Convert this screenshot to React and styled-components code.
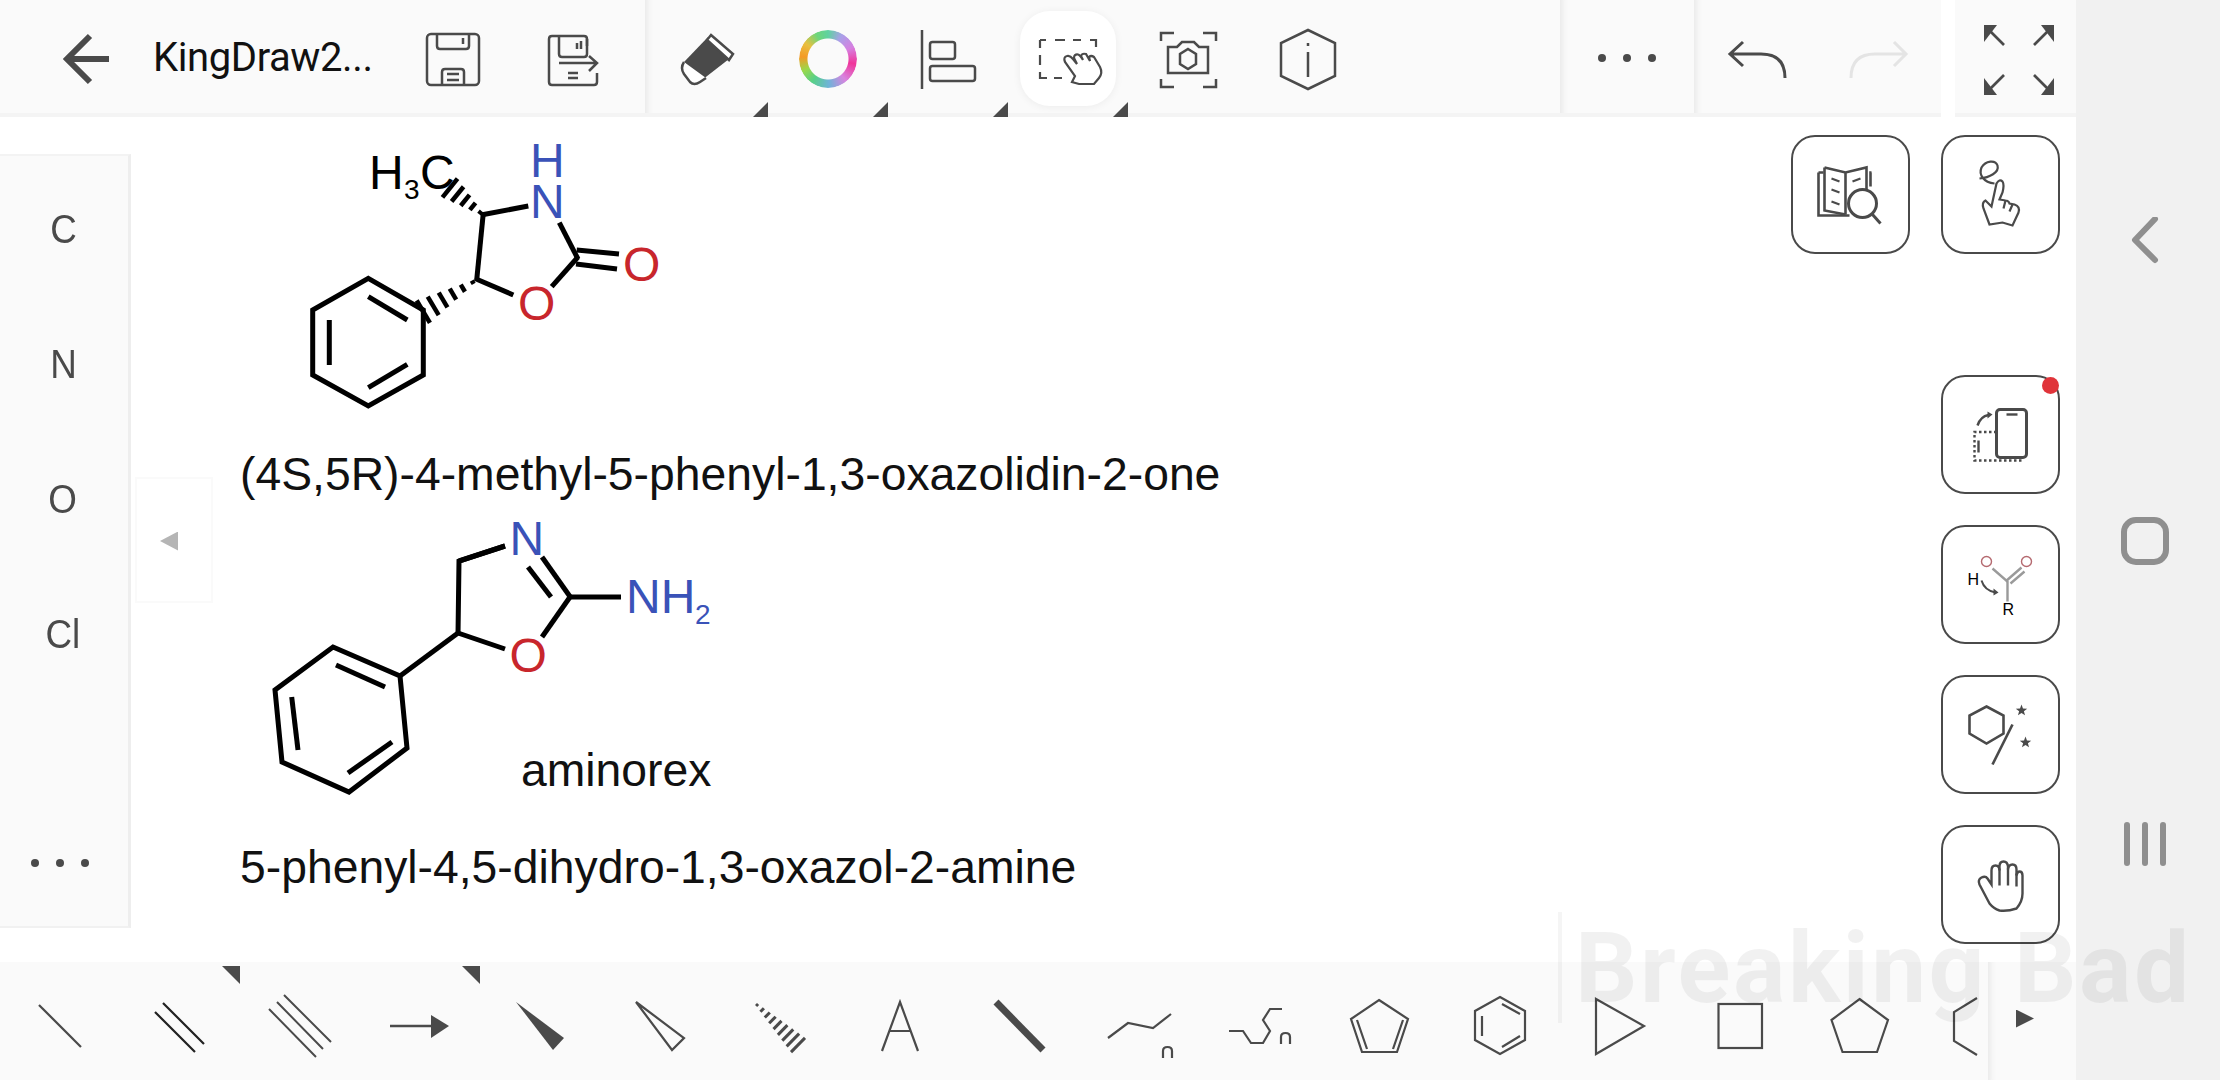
import React from 'react';
import styled, { createGlobalStyle } from 'styled-components';

const Global = createGlobalStyle`
  html, body { margin: 0; padding: 0; background: #fff; }
  #root { width: 2220px; height: 1080px; overflow: hidden; }
`;

const INK = '#4a4a4a';
const BLUE = '#3a52b8';
const RED = '#c8262c';

const Page = styled.div`
  position: relative; display: flex; width: 2220px; height: 1080px; overflow: hidden;
  background: #fff; font-family: "Liberation Sans", Arial, sans-serif;
`;
const Screen = styled.div`display: flex; flex-direction: column; width: 2076px; height: 1080px;`;
const TopBar = styled.header`display: flex; height: 117px; flex: none;`;
const TopGroup = styled.div`
  display: flex; flex: none; width: ${p => p.$w}px; margin-left: ${p => p.$gap || 0}px;
  background: #fafafa;
  box-shadow: inset 0 -4px 0 #f4f4f4 ${p => p.$edge ? ', inset 8px 0 6px -6px #e6e6e6' : ''};
`;
const CenterGroup = styled(TopGroup)`align-items: center; justify-content: center;`;
const Cell = styled.div`
  position: relative; flex: none; display: flex; align-items: center; justify-content: center;
  width: ${p => p.$w || 120}px; height: 100%; margin-left: ${p => p.$shift || 0}px;
`;
const Corner = styled.span`
  position: absolute; right: 0; bottom: 0; width: 15px; height: 15px; background: ${INK};
  clip-path: polygon(100% 0, 100% 100%, 0 100%);
`;
const FlagCorner = styled.span`
  position: absolute; right: 0; top: 4px; width: 18px; height: 18px; background: ${INK};
  clip-path: polygon(0 0, 100% 0, 100% 100%);
`;
const Title = styled.div`
  flex: none; width: 248px; padding-left: 8px; box-sizing: border-box; align-self: center;
  font-family: Roboto, sans-serif; font-size: 40px; color: #111; white-space: nowrap;
  letter-spacing: -0.4px; margin-top: -3px;
`;
const Tile = styled.div`
  width: 96px; height: 95px; border-radius: 30px; background: #fff;
  box-shadow: 0 1px 8px rgba(0,0,0,.06);
`;
const Pic = styled.svg`display: block; flex: none; fill: none; stroke: ${p => p.$stroke || INK}; stroke-width: ${p => p.$sw || 2.5};`;
const Ring = styled.div`
  width: 58px; height: 58px; border-radius: 50%;
  background: conic-gradient(#5fd2a0 0deg, #a9a0e8 30deg, #d77fe0 65deg, #f0349a 100deg, #d884df 140deg, #6fb3d8 178deg, #58d088 215deg, #9ad84a 245deg, #f59a25 275deg, #e8c040 305deg, #6ed67a 335deg, #5fd2a0 360deg);
  -webkit-mask: radial-gradient(circle, transparent 20px, #000 21px);
  mask: radial-gradient(circle, transparent 20px, #000 21px);
`;
const DotRow = styled.div`display: flex; gap: ${p => p.$gap}px; margin-top: ${p => p.$top || 0}px; margin-right: ${p => p.$right || 0}px;`;
const Dot = styled.i`display: block; width: 8px; height: 8px; border-radius: 50%; background: ${INK};`;
const NavBar = styled.i`display: block; width: 6px; height: 44px; border-radius: 3px; background: #8f8f8f;`;

const Canvas = styled.main`
  position: relative; flex: 1; display: flex; justify-content: space-between; align-items: flex-start; min-height: 0;
`;
const Rail = styled.aside`
  display: flex; flex-direction: column; align-items: center; box-sizing: border-box;
  width: 131px; height: 774px; margin-top: 37px; padding-top: 6px; padding-right: 2px;
  background: #fafafa; border-right: 3px solid #eeeeee; border-top: 2px solid #f3f3f3; border-bottom: 2px solid #f1f1f1;
`;
const Element = styled.div`
  height: 135px; flex: none; display: flex; align-items: center; justify-content: center;
  font-size: 40px; color: ${INK}; transform: scaleX(.92);
`;
const RailMore = styled.div`margin-top: auto; margin-bottom: 59px; margin-right: 6px;`;
const Collapse = styled.div`
  position: absolute; left: 135px; top: 360px; width: 78px; height: 126px; box-sizing: border-box;
  display: flex; align-items: center; justify-content: flex-start; padding-left: 23px;
  border: 2px solid #fafafa; background: #fff;
`;
const CollapseArrow = styled.span`
  width: 18px; height: 19px; background: #b5b5b5; margin-top: 2px;
  clip-path: polygon(0 50%, 100% 0, 100% 100%);
`;
const Sidebar = styled.aside`
  display: flex; flex-direction: column; align-items: flex-end; padding: 18px 16px 0 0; gap: 31px;
`;
const Row = styled.div`display: flex; gap: 31px; margin-bottom: 90px;`;
const SideButton = styled.button`
  position: relative; width: 119px; height: 119px; padding: 0; box-sizing: border-box;
  display: flex; align-items: center; justify-content: center;
  background: #fff; border: 2.5px solid ${INK}; border-radius: 24px;
`;
const Badge = styled.span`
  position: absolute; right: -1px; top: 0; width: 17px; height: 17px; border-radius: 50%; background: #e0343a;
`;
const Molecule = styled.svg`
  position: absolute; left: ${p => p.$x}px; top: ${p => p.$y}px; display: block; fill: none;
  stroke: #000; stroke-width: 5; stroke-linecap: butt; stroke-linejoin: miter;
`;
const Atom = styled.text`
  fill: ${p => p.$c || '#000'}; stroke: none; font-family: "Liberation Sans", Arial, sans-serif; font-size: ${p => p.$s || 48}px;
`;
const Label = styled.div`
  position: absolute; left: ${p => p.$x}px; top: ${p => p.$y}px; white-space: nowrap;
  font-size: 46.3px; line-height: 50px; color: #111;
`;
const BottomBar = styled.footer`display: flex; height: 118px; flex: none; background: #fafafa;`;
const Strip = styled.div`display: flex; width: 1988px; flex: none; overflow: hidden;`;
const Tail = styled.div`
  flex: 1; display: flex; align-items: center; padding-left: 28px; padding-bottom: 5px;
  box-shadow: inset 8px 0 6px -6px #e6e6e6;
`;
const Play = styled.span`width: 18px; height: 18px; background: ${INK}; clip-path: polygon(0 0, 100% 50%, 0 100%);`;
const Nav = styled.nav`
  position: relative; width: 144px; height: 1080px; flex: none; background: #f1f1f1;
  display: flex; flex-direction: column; align-items: center; padding-top: 217px; box-sizing: border-box;
`;
const Watermark = styled.div`
  position: absolute; left: 1575px; top: 914px; white-space: nowrap; pointer-events: none;
  font-family: Roboto, sans-serif; font-size: 98px; line-height: 110px; font-weight: 700;
  color: rgba(0,0,0,.055); letter-spacing: 2.5px;
`;
const WatermarkBar = styled.div`
  position: absolute; left: 1558px; top: 912px; width: 4px; height: 111px; background: rgba(0,0,0,.04); pointer-events: none;
`;

const Top = ({ x, children, sw, stroke }) => (
  <Pic width="120" height="117" viewBox={`${x} 0 120 117`} $sw={sw} $stroke={stroke}>{children}</Pic>
);
const Low = ({ x, children, sw, stroke }) => (
  <Pic width="120" height="118" viewBox={`${x} 962 120 118`} $sw={sw} $stroke={stroke}>{children}</Pic>
);
const Side = ({ x, y, children, sw }) => (
  <Pic width="114" height="114" viewBox={`${x + 2.5} ${y + 2.5} 114 114`} $sw={sw}>{children}</Pic>
);

const Ln = ({ d, w, c, ...r }) => (
  <line x1={d[0]} y1={d[1]} x2={d[2]} y2={d[3]} strokeWidth={w} stroke={c} {...r} />
);

const stripes = (ax, ay, bx, by, n, maxHalf) => {
  const dx = bx - ax, dy = by - ay, L = Math.hypot(dx, dy), nx = -dy / L, ny = dx / L;
  return Array.from({ length: n }, (_, i) => {
    const t = (i + 0.4) / (n - 0.6), h = maxHalf * t + 1;
    const cx = ax + dx * t, cy = ay + dy * t;
    return [cx - nx * h, cy - ny * h, cx + nx * h, cy + ny * h];
  });
};

const Bonds = ({ list }) => list.map((d, i) => <Ln key={i} d={d} />);

const mol1 = [
  [476.7, 280, 483.3, 213], [481, 215, 528.3, 206], [559.3, 222.7, 578, 259],
  [576.7, 250, 619, 254], [576, 264, 617, 269], [578, 257, 551.7, 286.7], [513.3, 295, 475, 278.5],
  [368.3, 296.7, 407.3, 320], [329.3, 320, 329.3, 365], [368.3, 387.7, 407.3, 364.3],
];
const mol2 = [
  [336, 665, 385, 687], [291.7, 697, 298, 750], [348, 773, 392, 742],
  [400, 676, 458, 633], [505, 546, 459, 561], [542, 557, 571, 598], [528, 567, 551, 597],
  [569, 597, 621, 597], [570, 597, 542, 637], [505, 649, 458, 633],
];

const Star = ({ cx, cy, r }) => {
  const pts = Array.from({ length: 10 }, (_, i) => {
    const a = -Math.PI / 2 + i * Math.PI / 5, q = i % 2 ? r * 0.42 : r;
    return `${cx + q * Math.cos(a)},${cy + q * Math.sin(a)}`;
  }).join(' ');
  return <polygon points={pts} fill={INK} stroke="none" />;
};

const Arrowhead = ({ pts }) => <polygon points={pts} fill={INK} stroke="none" />;

export default function App() {
  return (
    <Page>
      <Global />
      <Screen>
        <TopBar>
          <TopGroup $w={645}>
            <Cell $w={145}>
              <Pic width="145" height="117" viewBox="0 0 145 117" $sw={6}>
                <path d="M109 59 H68 M90 36 L67 59 L90 82" />
              </Pic>
            </Cell>
            <Title>KingDraw2...</Title>
            <Cell>
              <Top x={393} sw={2.5}>
                <rect x="427" y="34" width="52" height="51" rx="4" />
                <path d="M437 34 V46 q0 3 3 3 H466 q3 0 3 -3 V34 M463 38 V44 M442 85 V72 q0 -3 3 -3 H461 q3 0 3 3 V85 M447 74 H459 M447 80 H459" />
              </Top>
            </Cell>
            <Cell>
              <Top x={513} sw={2.5}>
                <path d="M587 46 V39 q0 -3 -3 -3 H552 q-3 0 -3 3 V82 q0 3 3 3 H594 q3 0 3 -3 V73" />
                <path d="M559 36 V54 q0 3 3 3 H584 q3 0 3 -3 V39 M559 63 H596 M589 56 L597 63 L589 71 M568 73 H578 M568 78 H578 M581 41 V49 M577 43 V49" />
              </Top>
            </Cell>
          </TopGroup>
          <TopGroup $w={915} $edge>
            <Cell $shift={3}>
              <Top x={648} sw={2.5}>
                <polygon points="684,62 708,37 729,59 702,80" fill={INK} stroke="none" />
                <path d="M711 35 L733 54 L729 60 L707 40 Z" fill="#fff" />
                <path d="M684 62 Q680 68 684 74 L690 82 Q694 86 700 82 L706 78" fill="#fff" />
              </Top>
              <Corner />
            </Cell>
            <Cell><Ring /><Corner /></Cell>
            <Cell>
              <Top x={888} sw={2.5}>
                <path d="M922 30 V89" />
                <rect x="930" y="42" width="25" height="17" rx="2.5" />
                <rect x="930" y="66" width="45" height="15" rx="2.5" />
              </Top>
              <Corner />
            </Cell>
            <Cell>
              <Tile>
                <Pic width="96" height="95" viewBox="1020 12 96 95" $sw={2.2}>
                  <path d="M1040 41 h6 M1055 41 h10 M1073 41 h8 M1090 41 h6 v7 M1040 41 v8 M1040 56 v10 M1040 73 v6 h7 M1054 79 h8" />
                  <path d="M1072 83 L1075 77 L1065 63 Q1063 58 1067 57 Q1070 56 1073 60 L1077 65 L1074 59 Q1074 55 1078 55.5 Q1080 56 1083 61 L1081 57 Q1082 54 1086 55 L1090 62 L1089 58 Q1091 56 1094 58 L1100 68 Q1103 74 1099 79 L1094 85 L1079 85 Z" fill="#fff" />
                </Pic>
              </Tile>
              <Corner />
            </Cell>
            <Cell>
              <Top x={1128} sw={2.5}>
                <path d="M1174 33 H1161 V41 M1203 33 H1216 V41 M1161 79 V87 H1174 M1216 79 V87 H1203" />
                <path d="M1168 73 V47 H1177 L1182 42 H1194 L1199 47 H1208 V73 Z" />
                <polygon points="1188,49 1196,54 1196,64 1188,69 1180,64 1180,54" />
              </Top>
            </Cell>
            <Cell>
              <Top x={1248} sw={2.5}>
                <polygon points="1308,30 1335,43 1335,76 1308,89 1281,76 1281,43" />
                <path d="M1308 52 V77 M1308 43 V46" />
              </Top>
            </Cell>
          </TopGroup>
          <CenterGroup $w={134} $edge>
            <DotRow $gap={17} $top={-1}><Dot /><Dot /><Dot /></DotRow>
          </CenterGroup>
          <TopGroup $w={247} $edge>
            <Pic width="247" height="117" viewBox="1694 0 247 117" $sw={3}>
              <path d="M1743 42 L1730 54 L1743 66 M1730 54 H1761 Q1785 54 1785 78" />
              <path d="M1894 42 L1906 54 L1894 66 M1906 54 H1875 Q1851 54 1851 78" stroke="#e4e4e4" />
            </Pic>
          </TopGroup>
          <TopGroup $w={121} $gap={14}>
            <Pic width="121" height="117" viewBox="1955 0 121 117" $sw={2.6}>
              <Arrowhead pts="1984,25 1997,25 1984,42" /><path d="M1987 28 L2004 45" />
              <Arrowhead pts="2054,25 2041,25 2054,42" /><path d="M2051 28 L2034 45" />
              <Arrowhead pts="1984,95 1997,95 1984,78" /><path d="M1987 92 L2004 75" />
              <Arrowhead pts="2054,95 2041,95 2054,78" /><path d="M2051 92 L2034 75" />
            </Pic>
          </TopGroup>
        </TopBar>

        <Canvas>
          <Rail>
            <Element>C</Element>
            <Element>N</Element>
            <Element>O</Element>
            <Element>Cl</Element>
            <RailMore><DotRow $gap={17}><Dot /><Dot /><Dot /></DotRow></RailMore>
          </Rail>
          <Collapse><CollapseArrow /></Collapse>

          <Molecule $x={300} $y={3} width="380" height="300" viewBox="300 120 380 300">
            <polygon points="368.3,278.3 423.3,310 423.3,375 368.3,406 312.7,375 312.7,310" />
            <Bonds list={mol1} />
            {stripes(476.7, 280, 423.3, 311.7, 6, 12).map((d, i) => <Ln key={i} d={d} w={4.5} />)}
            {stripes(483.3, 215, 450, 188, 5, 11).map((d, i) => <Ln key={i} d={d} w={4.5} />)}
            <Atom x="369" y="189">H</Atom>
            <Atom x="404" y="199" $s={28}>3</Atom>
            <Atom x="420" y="189">C</Atom>
            <Atom x="530" y="177" $c={BLUE}>H</Atom>
            <Atom x="530" y="218" $c={BLUE}>N</Atom>
            <Atom x="518" y="320" $c={RED}>O</Atom>
            <Atom x="623" y="281" $c={RED}>O</Atom>
          </Molecule>

          <Molecule $x={260} $y={393} width="480" height="290" viewBox="260 510 480 290">
            <polygon points="333,647 400,676 407,748 349,792 282,762 275,690" />
            <polyline points="458,635 459,561 505,546" />
            <Bonds list={mol2} />
            <Atom x="509.5" y="555" $c={BLUE}>N</Atom>
            <Atom x="509.5" y="672" $c={RED}>O</Atom>
            <Atom x="626" y="613" $c={BLUE}>NH</Atom>
            <Atom x="695" y="624" $c={BLUE} $s={28}>2</Atom>
          </Molecule>

          <Label $x={240} $y={332}>(4S,5R)-4-methyl-5-phenyl-1,3-oxazolidin-2-one</Label>
          <Label $x={521} $y={628}>aminorex</Label>
          <Label $x={240} $y={725}>5-phenyl-4,5-dihydro-1,3-oxazol-2-amine</Label>

          <Sidebar>
            <Row>
              <SideButton>
                <Side x={1792} y={135} sw={2.6}>
                  <path d="M1819 172 V215 H1850 M1819 172 H1824 M1872 172 H1871 V186" />
                  <path d="M1825 167 L1846 172 L1867 167 V190 M1825 167 V210 L1846 214 M1846 172 V214" />
                  <path d="M1832 178 L1840 181 M1853 181 L1861 178 M1832 189 L1840 192 M1832 201 L1840 204" strokeWidth="2.2" />
                  <circle cx="1863" cy="203" r="14" fill="#fff" strokeWidth="3" />
                  <path d="M1873 214 L1881 223" strokeWidth="3" />
                </Side>
              </SideButton>
              <SideButton>
                <Side x={1942} y={135} sw={2.2}>
                  <path d="M1980 178 C1990 177 2000 172 1998 165 C1996 159 1986 160 1982 167 C1979 174 1984 182 1995 183" />
                  <path d="M1990 224 L1984 208 Q1982 202 1986 200 L1992 206 L1997 183 Q2000 178 2003 181 Q2005 184 2003 192 L2000 199 L2006 200 Q2009 200 2010 203 L2015 204 Q2021 206 2019 212 L2013 225 L2003 222 Z" fill="#fff" />
                  <path d="M2006 200 L2004 208 M2013 204 L2010 211" />
                </Side>
              </SideButton>
            </Row>
            <SideButton>
              <Side x={1942} y={375} sw={3}>
                <rect x="1997" y="409" width="30" height="48" rx="3.5" />
                <path d="M2007 414 H2018" strokeWidth="2.4" />
                <path d="M1997 431.5 H1975 V460 H2023" strokeWidth="2.4" strokeDasharray="2.5 2.5" />
                <path d="M1979 440 V452" strokeWidth="2.4" />
                <path d="M1978 425 Q1981 416 1989 414.5" strokeWidth="2.4" />
                <Arrowhead pts="1988,411 1993,414 1988,418" />
              </Side>
              <Badge />
            </SideButton>
            <SideButton>
              <Side x={1942} y={525} sw={2}>
                <circle cx="1987" cy="561" r="5" stroke="#b56a70" strokeWidth="1.4" />
                <circle cx="2027" cy="561" r="5" stroke="#b56a70" strokeWidth="1.4" />
                <path d="M1993 568 L2008 581 L2008 601 M2006 581 L2022 567 M2011 583 L2025 571" stroke="#9a9a9a" strokeWidth="2.4" />
                <Atom x="1968" y="584" $s={16}>H</Atom>
                <Atom x="2003" y="614" $s={16}>R</Atom>
                <path d="M1982 580 Q1985 590 1996 592" />
                <Arrowhead pts="1994,588 1999,592 1994,595" />
              </Side>
            </SideButton>
            <SideButton>
              <Side x={1942} y={675} sw={2.6}>
                <polygon points="1987,706 2004,715 2004,733 1987,743 1970,733 1970,715" />
                <path d="M2013 724 L1993 764" />
                <Star cx={2022} cy={710} r={6} />
                <Star cx={2026} cy={742} r={6} />
              </Side>
            </SideButton>
            <SideButton>
              <Side x={1942} y={825} sw={2.4}>
                <path d="M1990 903 L1980 884 Q1978 879 1982 877 Q1986 875 1988 878 L1992 884 V870 Q1992 865 1996 865 Q2000 865 2000 870 V866 Q2000 861 2004 861 Q2008 861 2008.5 866 V869 Q2009 864 2013 864 Q2017 864 2017 869 V875 Q2018 871 2020 871 Q2023 871 2023 875 V893 Q2023 901 2017 908 Q2008 911 2000 910 Q1994 908 1990 903 Z" />
                <path d="M2000 868 V885 M2008.5 868 V885 M2017 873 V886" />
              </Side>
            </SideButton>
          </Sidebar>
        </Canvas>

        <BottomBar>
          <Strip>
            <Cell>
              <Low x={0} sw={2.2}><path d="M39 1005 L81 1047" /></Low>
            </Cell>
            <Cell>
              <Low x={120} sw={2.2} stroke="#222"><path d="M163 1003 L204 1044 M155 1012 L195 1052" /></Low>
              <FlagCorner />
            </Cell>
            <Cell>
              <Low x={240} sw={2}><path d="M284 995 L331 1042 M277 1002 L323 1049 M269 1009 L316 1057" /></Low>
            </Cell>
            <Cell>
              <Low x={360}>
                <path d="M390 1026 H434" />
                <Arrowhead pts="431,1015 449,1026 431,1038" />
              </Low>
              <FlagCorner />
            </Cell>
            <Cell>
              <Low x={480}><Arrowhead pts="516,1002 564,1038 553,1050" /></Low>
            </Cell>
            <Cell>
              <Low x={600} sw={2.2}><polygon points="636,1002 684,1038 672,1050" /></Low>
            </Cell>
            <Cell>
              <Low x={720}>
                {stripes(755, 1003, 798, 1045, 9, 9).map((d, i) => <Ln key={i} d={d} w={3} />)}
              </Low>
            </Cell>
            <Cell>
              <Low x={840} sw={2.2}><path d="M882 1051 L900 1002 L918 1051 M889 1031 H910" /></Low>
            </Cell>
            <Cell>
              <Low x={960} sw={7}><path d="M996 1002 L1043 1050" /></Low>
            </Cell>
            <Cell>
              <Low x={1080} sw={2.2}>
                <path d="M1108 1038 L1128 1023 L1153 1028 L1171 1014" />
                <path d="M1163 1058 V1051 Q1163 1047 1167.5 1047 Q1172 1047 1172 1051 V1058" />
              </Low>
            </Cell>
            <Cell>
              <Low x={1200} sw={2.2}>
                <path d="M1229 1031 H1243 L1251 1043 H1263 L1270 1031 L1263 1020 L1270 1009 H1282" />
                <path d="M1281 1044 V1037 Q1281 1033 1285.5 1033 Q1290 1033 1290 1037 V1044" />
              </Low>
            </Cell>
            <Cell>
              <Low x={1320} sw={2.2}>
                <polygon points="1379,1000 1408,1019 1397,1052 1362,1052 1351,1019" />
                <path d="M1403 1020 L1393 1049 M1357 1020 L1367 1049" />
              </Low>
            </Cell>
            <Cell>
              <Low x={1440} sw={2.2}>
                <polygon points="1500,997 1525,1011 1525,1040 1500,1054 1475,1040 1475,1011" />
                <path d="M1482 1016 V1036 M1502 1004 L1520 1014 M1502 1047 L1520 1036" />
              </Low>
            </Cell>
            <Cell>
              <Low x={1560} sw={2.2}><polygon points="1596,999 1644,1026 1596,1054" /></Low>
            </Cell>
            <Cell>
              <Low x={1680} sw={2.2}><rect x="1718.5" y="1004" width="43.5" height="44" /></Low>
            </Cell>
            <Cell>
              <Low x={1800} sw={2.2}><polygon points="1859.5,999 1888,1020 1877,1052 1842.5,1052 1831.5,1020" /></Low>
            </Cell>
            <Cell>
              <Low x={1920} sw={2.2}><path d="M1977 998 L1954 1012 V1041 L1977 1055" /></Low>
            </Cell>
          </Strip>
          <Tail><Play /></Tail>
        </BottomBar>
      </Screen>

      <Nav>
        <Pic width="144" height="370" viewBox="2076 217 144 370" $stroke="#8f8f8f" $sw={6}>
          <path d="M2155 219 L2135 240 L2155 260" strokeLinecap="round" strokeLinejoin="round" />
          <rect x="2124" y="520" width="42" height="42" rx="12" />
        </Pic>
        <DotRow $gap={12} $top={235} $right={6}>
          {[0, 1, 2].map(i => <NavBar key={i} />)}
        </DotRow>
      </Nav>

      <WatermarkBar />
      <Watermark>Breaking Bad</Watermark>
    </Page>
  );
}
